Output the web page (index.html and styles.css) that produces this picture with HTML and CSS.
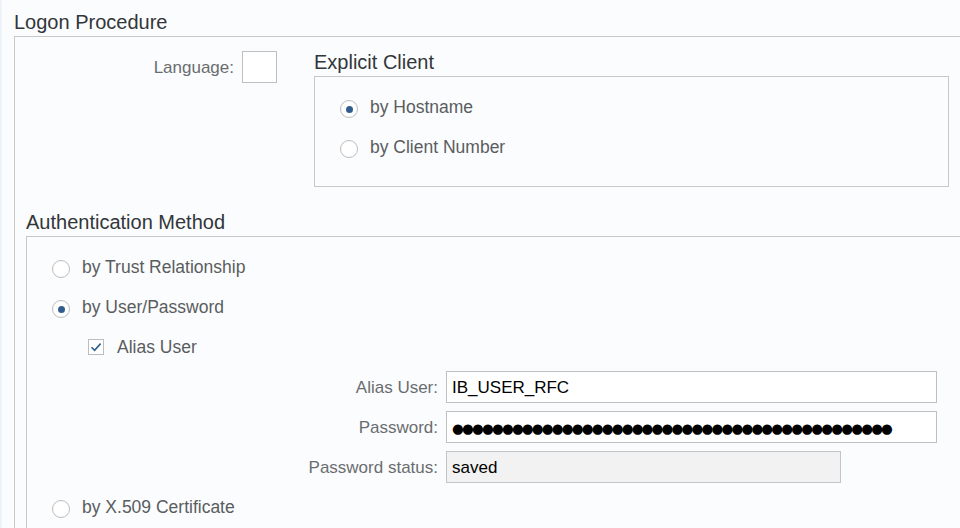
FILE: index.html
```html
<!DOCTYPE html>
<html lang="en">
<head>
<meta charset="utf-8">
<title>Logon Procedure</title>
<link rel="stylesheet" href="styles.css">
</head>
<body>
<div class="page">
  <h2 class="group-title">Logon Procedure</h2>
  <section class="group">
    <div class="logon-row">
      <div class="lang">
        <span class="field-label">Language:</span>
        <div class="input input--tiny"></div>
      </div>
      <div class="subgroup">
        <h3 class="group-title">Explicit Client</h3>
        <div class="box">
          <div class="radio-row"><span class="radio radio--on"></span><span class="opt">by Hostname</span></div>
          <div class="radio-row"><span class="radio"></span><span class="opt">by Client Number</span></div>
        </div>
      </div>
    </div>
    <h3 class="group-title auth-title">Authentication Method</h3>
    <section class="auth">
      <div class="radio-row"><span class="radio"></span><span class="opt">by Trust Relationship</span></div>
      <div class="radio-row"><span class="radio radio--on"></span><span class="opt">by User/Password</span></div>
      <div class="check-row">
        <span class="checkbox"><svg viewBox="0 0 16 16" width="16" height="16"><path d="M3.5 8.2 L6.6 11.3 L12.6 4.6" fill="none" stroke="#2f5e8e" stroke-width="1.6"/></svg></span>
        <span class="opt opt--check">Alias User</span>
      </div>
      <div class="fields">
        <div class="field">
          <span class="field-label field-label--col">Alias User:</span>
          <div class="input input--wide"><span class="value">IB_USER_RFC</span></div>
        </div>
        <div class="field">
          <span class="field-label field-label--col">Password:</span>
          <div class="input input--wide"><span class="dots">●●●●●●●●●●●●●●●●●●●●●●●●●●●●●●●●●●●●●●●●●●●●</span></div>
        </div>
        <div class="field">
          <span class="field-label field-label--col">Password status:</span>
          <div class="input input--readonly"><span class="value">saved</span></div>
        </div>
      </div>
      <div class="radio-row"><span class="radio"></span><span class="opt">by X.509 Certificate</span></div>
    </section>
  </section>
</div>
</body>
</html>
```
FILE: styles.css
```css
html, body {
  margin: 0;
  padding: 0;
  height: 100%;
  overflow: hidden;
  background: #fbfcfd;
}
body {
  font-family: "Liberation Sans", Arial, sans-serif;
  color: #32363a;
}
.page {
  box-sizing: border-box;
  min-height: 100%;
  border-left: 2px solid #edf3f9;
  padding: 10px 0 0 12px;
}
.group-title {
  margin: 0 0 2px 0;
  font-size: 20px;
  line-height: 24px;
  font-weight: normal;
  color: #32363a;
}
.group {
  border-top: 1px solid #c8c8c8;
  border-left: 1px solid #c8c8c8;
  padding-left: 11px;
  min-height: 600px;
}
.logon-row {
  display: flex;
  align-items: flex-start;
  padding-top: 13px;
}
.lang {
  flex: 0 0 251px;
  margin-right: 37px;
  margin-top: 1px;
  display: flex;
  justify-content: flex-end;
  align-items: center;
  gap: 8px;
}
.field-label {
  font-size: 17px;
  color: #6a6d70;
  white-space: nowrap;
  padding-top: 2px;
}
.subgroup {
  flex: 0 0 635px;
}
.box {
  box-sizing: border-box;
  height: 111px;
  border: 1px solid #c8c8c8;
  padding: 12px 0 0 25px;
}
.radio-row {
  display: flex;
  align-items: center;
  gap: 12px;
  height: 40px;
}
.radio {
  box-sizing: border-box;
  width: 18px;
  height: 18px;
  border: 1px solid #bdbdbd;
  border-radius: 50%;
  background: #fff;
  display: flex;
  align-items: center;
  justify-content: center;
  flex: none;
}
.radio--on::after {
  content: "";
  width: 7px;
  height: 7px;
  border-radius: 50%;
  background: #2f5e8e;
}
.opt {
  font-size: 17.5px;
  color: #5a5d60;
  white-space: nowrap;
  padding-bottom: 3px;
}
.opt--check {
  padding-bottom: 0;
}
.auth-title {
  margin-top: 23px;
}
.auth {
  border-top: 1px solid #c8c8c8;
  border-left: 1px solid #c8c8c8;
  padding: 12px 0 0 25px;
  min-height: 400px;
}
.check-row {
  display: flex;
  align-items: center;
  gap: 13px;
  height: 36px;
  padding-left: 36px;
}
.checkbox {
  box-sizing: border-box;
  width: 16px;
  height: 16px;
  border: 1px solid #bdbdbd;
  background: #fff;
  flex: none;
  display: flex;
}
.checkbox svg {
  margin: -1px;
}
.fields {
  display: flex;
  flex-direction: column;
  gap: 8px;
  padding: 6px 0;
}
.field {
  display: flex;
  align-items: center;
  gap: 8px;
  margin-left: -25px;
}
.field-label--col {
  flex: 0 0 411px;
  text-align: right;
}
.input {
  box-sizing: border-box;
  height: 32px;
  border: 1px solid #bfbfbf;
  background: #fff;
  font-size: 17px;
  color: #000;
  padding: 0 5px;
  display: flex;
  align-items: center;
  white-space: nowrap;
  overflow: hidden;
}
.value {
  padding-top: 2px;
}
.input--tiny {
  width: 35px;
}
.input--wide {
  width: 491px;
}
.input--readonly {
  width: 395px;
  background: #f2f2f2;
  border-color: #c4c4c4;
}
.dots {
  font-family: "DejaVu Sans", sans-serif;
  font-size: 13.5px;
  letter-spacing: -1.8px;
  padding-top: 1px;
}
```
